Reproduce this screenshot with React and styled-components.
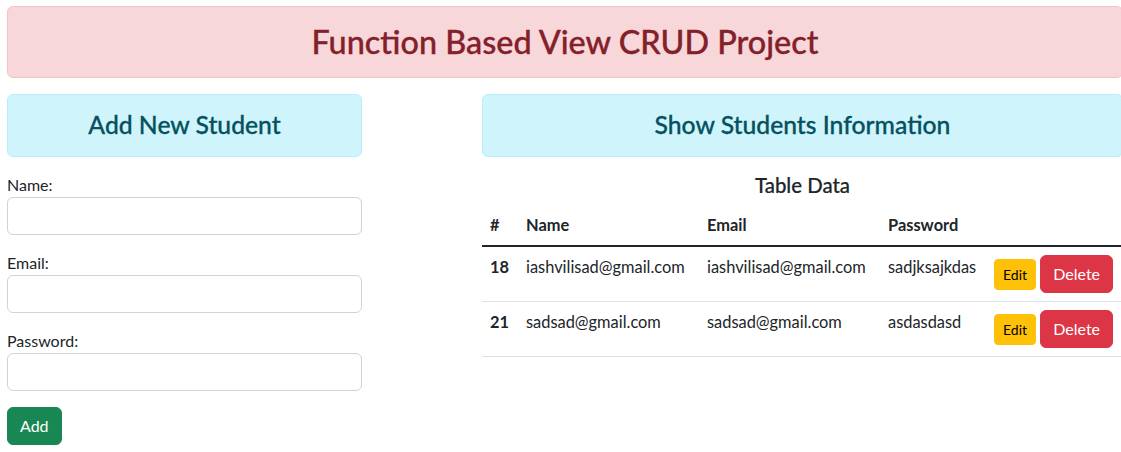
import React from "react";
import styled, { createGlobalStyle } from "styled-components";

const Global = createGlobalStyle`
  html, body { margin: 0; padding: 0; overflow: hidden; background: #fff; }
  body {
    font-family: "Segoe UI", Lato, "Liberation Sans", sans-serif;
    font-size: 16.4px;
    line-height: 24px;
    color: #212529;
  }
  *, *::before, *::after { box-sizing: border-box; }
`;

const Page = styled.div`
  width: 1116px;
  padding: 6px 0 0 7px;
  box-sizing: content-box;
`;

const Alert = styled.div`
  padding: 16px;
  margin-bottom: 16px;
  border: 1px solid ${(p) => (p.$tone === "danger" ? "#f5c2c7" : "#b6effb")};
  background: ${(p) => (p.$tone === "danger" ? "#f8d7da" : "#cff4fc")};
  color: ${(p) => (p.$tone === "danger" ? "#842029" : "#055160")};
  border-radius: 6px;
  text-align: center;
`;

const Title = styled.h2`
  margin: 0;
  font-size: 32.4px;
  font-weight: 500;
  line-height: 37.6px;
  -webkit-text-stroke: 0.35px currentColor;
`;

const SubTitle = styled.h4`
  margin: 0;
  font-size: 24.7px;
  font-weight: 500;
  line-height: 28.6px;
  -webkit-text-stroke: 0.3px currentColor;
`;

const Columns = styled.div`
  display: grid;
  grid-template-columns: 355px 641px;
  column-gap: 120px;
  align-items: start;
  padding-top: 0.7px;
`;

const Field = styled.div`
  margin-bottom: 16px;
`;

const Label = styled.label`
  display: block;
  font-size: 16px;
  line-height: 24px;
`;

const Input = styled.input`
  display: block;
  width: 100%;
  height: 38px;
  padding: 6px 12px;
  font: inherit;
  border: 1px solid #ced4da;
  border-radius: 6px;
  background: #fff;
  outline: none;
`;

const Button = styled.button`
  display: inline-block;
  font-family: inherit;
  font-size: ${(p) => (p.$small ? "14px" : "16px")};
  line-height: ${(p) => (p.$small ? "21px" : "24px")};
  padding: ${(p) => (p.$small ? "4px 8px" : "6px 12px")};
  border-radius: ${(p) => (p.$small ? "4px" : "6px")};
  border: 1px solid ${(p) => p.$bg};
  background: ${(p) => p.$bg};
  color: ${(p) => p.$fg};
  vertical-align: baseline;
  cursor: pointer;
`;

const TableTitle = styled.h5`
  margin: 0 0 8px;
  text-align: center;
  font-size: 20.4px;
  font-weight: 500;
  line-height: 24px;
  -webkit-text-stroke: 0.2px currentColor;
`;

const Table = styled.table`
  width: 100%;
  border-collapse: collapse;
  table-layout: fixed;
  vertical-align: top;
`;

const Th = styled.th`
  text-align: left;
  font-weight: 700;
  padding: 8px;
  border-bottom: 1px solid #dee2e6;
  white-space: nowrap;
  vertical-align: ${(p) => (p.$head ? "bottom" : "top")};
`;

const Td = styled.td`
  padding: 8px;
  border-bottom: 1px solid #dee2e6;
  vertical-align: top;
  white-space: nowrap;
`;

const Body = styled.tbody`
  border-top: 2px solid #212529;
`;

const students = [
  { id: 18, name: "iashvilisad@gmail.com", email: "iashvilisad@gmail.com", password: "sadjksajkdas" },
  { id: 21, name: "sadsad@gmail.com", email: "sadsad@gmail.com", password: "asdasdasd" },
];

export default function App() {
  return (
    <>
      <Global />
      <Page>
        <Alert $tone="danger">
          <Title>Function Based View CRUD Project</Title>
        </Alert>
        <Columns>
          <div>
            <Alert $tone="info">
              <SubTitle>Add New Student</SubTitle>
            </Alert>
            <form onSubmit={(e) => e.preventDefault()}>
              <Field>
                <Label htmlFor="name">Name:</Label>
                <Input id="name" type="text" />
              </Field>
              <Field>
                <Label htmlFor="email">Email:</Label>
                <Input id="email" type="email" />
              </Field>
              <Field>
                <Label htmlFor="password">Password:</Label>
                <Input id="password" type="password" />
              </Field>
              <Button type="submit" $bg="#198754" $fg="#fff">Add</Button>
            </form>
          </div>
          <div>
            <Alert $tone="info">
              <SubTitle>Show Students Information</SubTitle>
            </Alert>
            <TableTitle>Table Data</TableTitle>
            <Table>
              <colgroup>
                <col style={{ width: 36 }} />
                <col style={{ width: 181 }} />
                <col style={{ width: 181 }} />
                <col style={{ width: 106 }} />
                <col />
              </colgroup>
              <thead>
                <tr>
                  <Th $head>#</Th>
                  <Th $head>Name</Th>
                  <Th $head>Email</Th>
                  <Th $head>Password</Th>
                  <Th $head></Th>
                </tr>
              </thead>
              <Body>
                {students.map((s) => (
                  <tr key={s.id}>
                    <Th>{s.id}</Th>
                    <Td>{s.name}</Td>
                    <Td>{s.email}</Td>
                    <Td>{s.password}</Td>
                    <Td>
                      <Button $small $bg="#ffc107" $fg="#000">Edit</Button>{" "}
                      <Button $bg="#dc3545" $fg="#fff">Delete</Button>
                    </Td>
                  </tr>
                ))}
              </Body>
            </Table>
          </div>
        </Columns>
      </Page>
    </>
  );
}
